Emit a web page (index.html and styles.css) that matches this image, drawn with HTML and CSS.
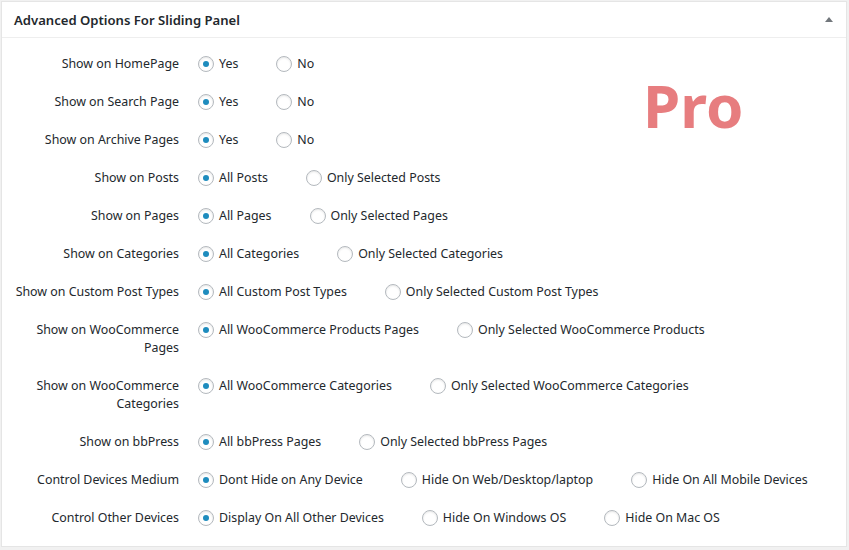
FILE: index.html
```html
<!DOCTYPE html>
<html>
<head>
<meta charset="utf-8">
<link rel="stylesheet" href="styles.css">
</head>
<body>
<div class="panel">
  <div class="panel-head">
    <h2 class="panel-title">Advanced Options For Sliding Panel</h2>
    <span class="toggle"></span>
  </div>
  <div class="panel-body">
    <div class="pro">Pro</div>
    <div class="row"><div class="label">Show on HomePage</div><div class="opts"><label class="opt"><span class="radio on"></span>Yes</label><label class="opt"><span class="radio"></span>No</label></div></div>
    <div class="row"><div class="label">Show on Search Page</div><div class="opts"><label class="opt"><span class="radio on"></span>Yes</label><label class="opt"><span class="radio"></span>No</label></div></div>
    <div class="row"><div class="label">Show on Archive Pages</div><div class="opts"><label class="opt"><span class="radio on"></span>Yes</label><label class="opt"><span class="radio"></span>No</label></div></div>
    <div class="row"><div class="label">Show on Posts</div><div class="opts"><label class="opt"><span class="radio on"></span>All Posts</label><label class="opt"><span class="radio"></span>Only Selected Posts</label></div></div>
    <div class="row"><div class="label">Show on Pages</div><div class="opts"><label class="opt"><span class="radio on"></span>All Pages</label><label class="opt"><span class="radio"></span>Only Selected Pages</label></div></div>
    <div class="row"><div class="label">Show on Categories</div><div class="opts"><label class="opt"><span class="radio on"></span>All Categories</label><label class="opt"><span class="radio"></span>Only Selected Categories</label></div></div>
    <div class="row"><div class="label">Show on Custom Post Types</div><div class="opts"><label class="opt"><span class="radio on"></span>All Custom Post Types</label><label class="opt"><span class="radio"></span>Only Selected Custom Post Types</label></div></div>
    <div class="row"><div class="label">Show on WooCommerce Pages</div><div class="opts"><label class="opt"><span class="radio on"></span>All WooCommerce Products Pages</label><label class="opt"><span class="radio"></span>Only Selected WooCommerce Products</label></div></div>
    <div class="row"><div class="label">Show on WooCommerce Categories</div><div class="opts"><label class="opt"><span class="radio on"></span>All WooCommerce Categories</label><label class="opt"><span class="radio"></span>Only Selected WooCommerce Categories</label></div></div>
    <div class="row"><div class="label">Show on bbPress</div><div class="opts"><label class="opt"><span class="radio on"></span>All bbPress Pages</label><label class="opt"><span class="radio"></span>Only Selected bbPress Pages</label></div></div>
    <div class="row"><div class="label">Control Devices Medium</div><div class="opts"><label class="opt"><span class="radio on"></span>Dont Hide on Any Device</label><label class="opt"><span class="radio"></span>Hide On Web/Desktop/laptop</label><label class="opt"><span class="radio"></span>Hide On All Mobile Devices</label></div></div>
    <div class="row"><div class="label">Control Other Devices</div><div class="opts"><label class="opt"><span class="radio on"></span>Display On All Other Devices</label><label class="opt"><span class="radio"></span>Hide On Windows OS</label><label class="opt"><span class="radio"></span>Hide On Mac OS</label></div></div>
  </div>
</div>
</body>
</html>
```

FILE: styles.css
```css
html, body {
  margin: 0;
  padding: 0;
  background: #f1f1f1;
}
body {
  padding: 1px 0 0 1px;
  font-family: "Noto Sans", "Open Sans", sans-serif;
  font-size: 12.4px;
  color: #23282d;
}
.panel {
  width: 844px;
  height: 544px;
  background: #fff;
  border: 1px solid #e5e5e5;
  position: relative;
}
.panel-head {
  height: 35px;
  border-bottom: 1px solid #eeeeee;
  display: flex;
  align-items: center;
  justify-content: space-between;
  padding: 0 13px 0 12px;
}
.panel-title {
  margin: 0;
  font-size: 13.1px;
  font-weight: 600;
  color: #23282d;
}
.toggle {
  width: 0;
  height: 0;
  border-left: 4px solid transparent;
  border-right: 4px solid transparent;
  border-bottom: 5px solid #72777c;
  margin-top: -1px;
}
.panel-body {
  padding: 7px 0 9px 9px;
}
.row {
  display: flex;
  align-items: flex-start;
  padding: 10px 0;
  line-height: 18px;
}
.label {
  width: 168px;
  text-align: right;
  flex: none;
}
.opts {
  display: flex;
  padding-left: 19px;
}
.opt {
  display: flex;
  align-items: center;
  margin-right: 38px;
  white-space: nowrap;
}
.radio {
  width: 14px;
  height: 14px;
  border: 1px solid #b4b9be;
  border-radius: 50%;
  box-shadow: inset 0 1px 2px rgba(0,0,0,0.1);
  margin-right: 5px;
  position: relative;
  flex: none;
}
.radio.on::after {
  content: "";
  position: absolute;
  left: 4px;
  top: 4px;
  width: 6px;
  height: 6px;
  border-radius: 50%;
  background: #1e8cbe;
}
.pro {
  position: absolute;
  left: 641px;
  top: 68px;
  font-size: 60px;
  font-weight: 700;
  line-height: 70px;
  color: #e77d7f;
}
```
